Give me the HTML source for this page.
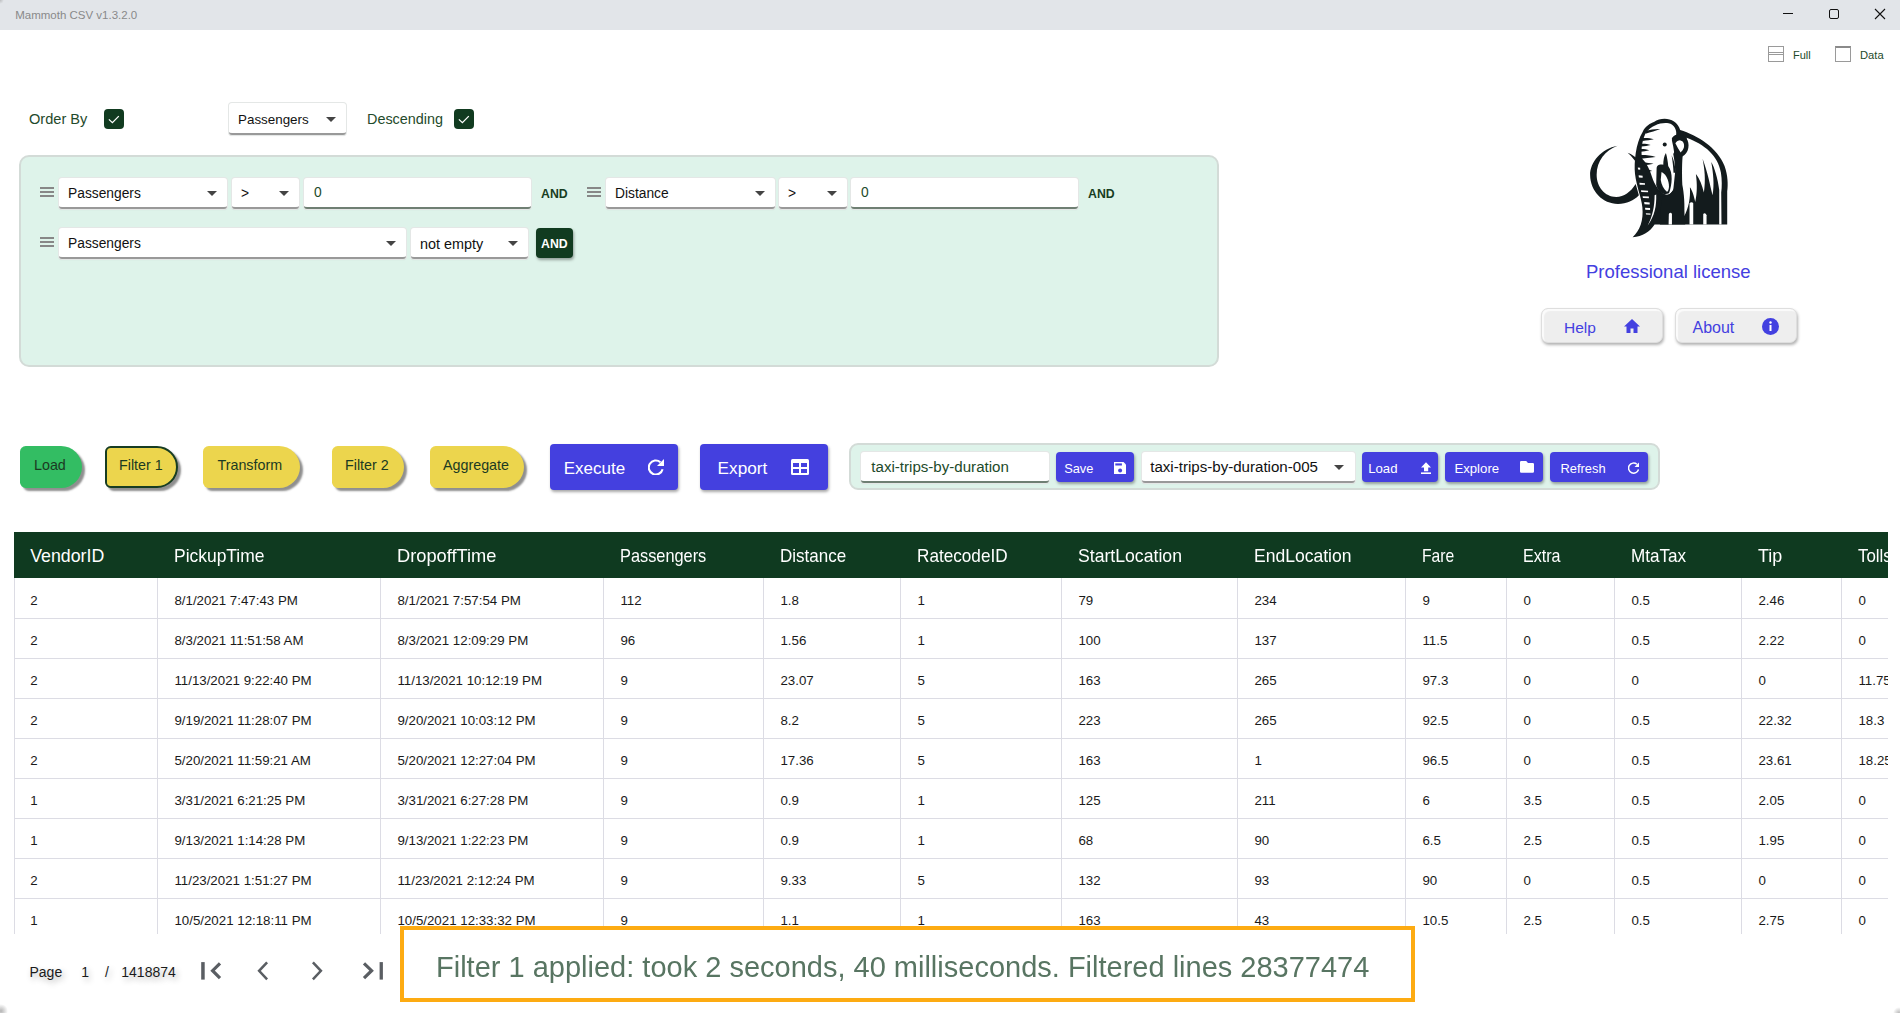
<!DOCTYPE html><html><head><meta charset="utf-8"><style>
*{box-sizing:border-box;margin:0;padding:0}
html,body{width:1900px;height:1013px;overflow:hidden;background:#fff;font-family:"Liberation Sans",sans-serif}
.a{position:absolute}
.t{position:absolute;white-space:nowrap;line-height:1}
.cb{position:absolute;width:20px;height:20px;background:#113b20;border-radius:4px}
.sel{position:absolute;background:#fff;border-radius:3px;box-shadow:0 0 0 1px #e4e7e6,0 1px 1px 0 rgba(0,0,0,.15);border-bottom:2px solid #999}
.arr{position:absolute;width:0;height:0;border-left:5px solid transparent;border-right:5px solid transparent;border-top:5px solid #444}
.ham{position:absolute;width:14px;height:10px;border-top:2px solid #878787;border-bottom:2px solid #878787}
.ham:after{content:"";position:absolute;left:0;top:2px;width:14px;height:2px;background:#878787}
.pipe{position:absolute;height:42px;border-radius:6px 22px 22px 6px;box-shadow:3px 3px 2px #8f8f8f}
.bbtn{position:absolute;background:#4440df;border-radius:4px;box-shadow:1px 2px 3px rgba(0,0,0,.35)}
.vl{position:absolute;width:1px;background:#dcdce4}
.hl{position:absolute;height:1px;background:#dcdce4}
</style></head><body>
<div class="a" style="left:0;top:0;width:1900px;height:30px;background:#e2e5e9"></div>
<div class="t" style="left:15.2px;top:10.47px;font-size:11.50px;color:#898989;">Mammoth CSV v1.3.2.0</div>
<div class="a" style="left:1783px;top:13px;width:10px;height:1px;background:#111"></div>
<div class="a" style="left:1829px;top:9px;width:10px;height:10px;border:1px solid #111;border-radius:2px"></div>
<svg class="a" style="left:1874px;top:8px" width="12" height="12" viewBox="0 0 12 12"><path d="M1 1L11 11M11 1L1 11" stroke="#111" stroke-width="1.1"/></svg>
<div class="a" style="left:1768px;top:46px;width:16px;height:16px;border:1px solid #9a9a9a"></div>
<div class="a" style="left:1768px;top:52px;width:16px;height:3px;border-top:1px solid #9a9a9a;border-bottom:1px solid #9a9a9a"></div>
<div class="t" style="left:1793.0px;top:49.69px;font-size:11.00px;color:#1d4a2a;">Full</div>
<div class="a" style="left:1835px;top:46px;width:16px;height:16px;border:1px solid #9a9a9a;border-top:2px solid #8a8a8a"></div>
<div class="t" style="left:1860.0px;top:49.52px;font-size:11.20px;color:#1d4a2a;">Data</div>
<div class="t" style="left:29.0px;top:112.14px;font-size:14.60px;color:#1f4a2b;">Order By</div>
<div class="cb" style="left:104px;top:109px"><svg width="20" height="20" viewBox="0 0 20 20" style="position:absolute;left:0;top:0"><path d="M4.9 10.4l3.5 3.3 6.4-6.6" fill="none" stroke="#fff" stroke-width="1.25"/></svg></div>
<div class="sel" style="left:229px;top:103px;width:117px;height:32px"></div>
<div class="t" style="left:238.0px;top:113.16px;font-size:13.40px;color:#111;">Passengers</div>
<div class="arr" style="left:326px;top:117px"></div>
<div class="t" style="left:367.0px;top:112.31px;font-size:14.40px;color:#1f4a2b;">Descending</div>
<div class="cb" style="left:454px;top:109px"><svg width="20" height="20" viewBox="0 0 20 20" style="position:absolute;left:0;top:0"><path d="M4.9 10.4l3.5 3.3 6.4-6.6" fill="none" stroke="#fff" stroke-width="1.25"/></svg></div>
<div class="a" style="left:19px;top:155px;width:1200px;height:212px;background:#def3ea;border:2px solid #d3dbd7;border-radius:10px"></div>
<div class="ham" style="left:40px;top:187px"></div>
<div class="sel" style="left:59px;top:178px;width:168px;height:31px"></div>
<div class="t" style="left:68.0px;top:187.42px;font-size:13.80px;color:#111;">Passengers</div>
<div class="arr" style="left:207px;top:191px"></div>
<div class="sel" style="left:232px;top:178px;width:67px;height:31px"></div>
<div class="t" style="left:241.0px;top:187.42px;font-size:13.80px;color:#111;">&gt;</div>
<div class="arr" style="left:279px;top:191px"></div>
<div class="sel" style="left:304px;top:178px;width:227px;height:31px;border-bottom-color:#6f7f73"></div>
<div class="t" style="left:314.0px;top:186.42px;font-size:13.80px;color:#1d4a2a;">0</div>
<div class="t" style="left:541.0px;top:187.59px;font-size:12.3px;font-weight:bold;color:#173d22">AND</div>
<div class="ham" style="left:587px;top:187px"></div>
<div class="sel" style="left:606px;top:178px;width:169px;height:31px"></div>
<div class="t" style="left:615.0px;top:187.42px;font-size:13.80px;color:#111;">Distance</div>
<div class="arr" style="left:755px;top:191px"></div>
<div class="sel" style="left:779px;top:178px;width:68px;height:31px"></div>
<div class="t" style="left:788.0px;top:187.42px;font-size:13.80px;color:#111;">&gt;</div>
<div class="arr" style="left:827px;top:191px"></div>
<div class="sel" style="left:851px;top:178px;width:227px;height:31px;border-bottom-color:#6f7f73"></div>
<div class="t" style="left:861.0px;top:186.42px;font-size:13.80px;color:#1d4a2a;">0</div>
<div class="t" style="left:1088.0px;top:187.59px;font-size:12.3px;font-weight:bold;color:#173d22">AND</div>
<div class="ham" style="left:40px;top:237px"></div>
<div class="sel" style="left:59px;top:228px;width:347px;height:31px"></div>
<div class="t" style="left:68.0px;top:237.42px;font-size:13.80px;color:#111;">Passengers</div>
<div class="arr" style="left:386px;top:241px"></div>
<div class="sel" style="left:411px;top:228px;width:117px;height:31px"></div>
<div class="t" style="left:420.0px;top:236.91px;font-size:14.40px;color:#111;">not empty</div>
<div class="arr" style="left:508px;top:241px"></div>
<div class="a" style="left:536px;top:228px;width:37px;height:30px;background:#113b20;border-radius:4px;box-shadow:1px 2px 3px rgba(0,0,0,.35)"></div>
<div class="t" style="left:541.0px;top:238.19px;font-size:12.3px;font-weight:bold;color:#fff">AND</div>
<svg class="a" style="left:1580px;top:110px" width="160" height="135" viewBox="0 0 1201 1013">
<g fill="#131b1d">
<path d="M282 268 C160 290 75 390 76 490 C78 610 170 705 285 705 C350 705 405 680 442 640 L418 555 C380 615 330 652 272 652 C185 650 125 575 125 485 C125 385 190 300 282 268 Z"/>
<path d="M395 955 C450 905 478 830 468 730 C460 650 425 580 413 480 C405 390 418 250 470 165 C490 118 530 100 555 90 C620 45 725 60 752 150 C880 190 1030 280 1085 420 C1110 490 1112 560 1105 610 L1105 860 L560 860 C525 915 470 950 395 955 Z"/>
</g>
<g fill="#fff">
<path d="M492 175 C540 112 610 92 665 100 C705 108 728 150 722 185 C700 195 688 210 690 228 C705 285 712 350 718 430 L700 600 C680 630 660 640 640 635 C590 610 560 560 540 500 C520 440 500 400 470 370 C455 330 460 240 492 175 Z"/>
<path d="M800 208 C935 258 1035 340 1058 470 C1066 520 1066 580 1060 620 L1062 860 L1045 860 L1045 600 C1035 520 1010 430 985 390 C1000 470 1010 560 995 640 C975 560 960 470 920 365 C935 440 945 520 930 620 C915 560 900 520 870 480 C880 560 880 620 865 690 C855 640 840 600 825 580 C830 660 815 740 780 800 C790 720 780 620 768 560 C765 480 765 380 772 335 C800 310 815 260 800 208 Z"/>
</g>
<g fill="#131b1d">
<path fill="#fff" d="M716 250 C730 222 768 220 782 245 C795 272 785 305 758 322 C742 300 728 275 716 250 Z"/>
<!-- ear C -->
<path d="M688 218 C700 180 760 172 795 208 C830 250 818 325 768 348 L752 318 C782 300 790 262 772 238 C752 218 725 222 712 242 Z"/>
<circle cx="636" cy="258" r="15"/>
<!-- forehead hair streaks (taper right) -->
<path d="M488 158 C530 148 570 140 602 143 C570 156 530 166 492 178Z"/>
<path d="M468 210 C500 208 530 211 554 219 C530 224 500 228 470 232Z"/>
<path d="M460 253 C488 252 510 255 530 262 C508 267 485 271 462 273Z"/>
<path d="M452 293 C478 292 500 296 520 302 C498 307 475 311 455 313Z"/>
<path d="M438 338 C490 336 532 341 568 352 C530 359 480 363 440 364Z"/>
<path d="M468 393 C500 393 526 397 552 404 C526 411 500 413 472 414Z"/>
<path d="M498 446 C515 446 530 451 542 458 C526 461 512 463 500 463Z"/>
<!-- neck dark band -->
<path d="M715 300 C730 360 740 430 745 520 L770 600 L790 860 L600 860 C600 760 610 700 620 650 C660 650 700 620 715 560 C720 500 715 400 700 330 Z"/>
<!-- face hair streaks near trunk -->
<path d="M688 340 C705 380 718 420 715 470 L702 470 C700 425 695 385 688 340 Z"/>
<!-- trunk curl -->
<path d="M575 440 C575 410 600 405 625 410 C625 380 630 345 645 322 C655 360 660 390 662 420 C700 470 692 560 668 625 C620 645 580 605 572 560 Z"/>
<!-- second tusk -->
<path d="M358 320 C420 345 460 390 490 450 C520 520 560 590 600 620 C630 640 660 640 672 635 C620 662 560 640 530 592 C500 540 470 470 440 420 C420 385 390 350 358 320 Z"/>
</g>
<g fill="#fff">
<path d="M612 466 C645 480 668 530 668 575 C665 600 660 612 652 614 C628 595 612 560 606 525 Z"/>
<path d="M572 635 C575 720 560 800 508 866 C545 800 560 720 560 640 Z"/>
<path d="M665 860 L667 780 C672 768 686 768 690 780 L690 860 Z"/>
<path d="M822 860 L822 700 C830 690 845 690 850 700 L850 860 Z"/>
<path d="M925 860 L925 780 C932 770 945 772 950 790 L950 860 Z"/>
<path d="M434 432 L452 434 L452 448 L436 447Z"/>
<path d="M440 490 L470 493 L470 508 L442 506Z"/>
<path d="M446 546 L488 549 L488 561 L448 560Z"/>
<path d="M458 603 L511 606 L511 617 L460 616Z"/>
<path d="M470 647 L517 650 L517 662 L472 661Z"/>
<path d="M482 691 L523 694 L523 709 L484 707Z"/>
<path d="M488 733 L526 736 L526 751 L490 749Z"/>
<path d="M494 774 L529 776 L529 786 L496 785Z"/>
</g>
</svg>

<div class="t" style="left:1586.0px;top:262.84px;font-size:18.50px;color:#4340e0;">Professional license</div>
<div class="a" style="left:1541px;top:308px;width:122px;height:35px;background:#eeeeee;border:1px solid #dedede;border-radius:7px;box-shadow:inset 2px 2px 1px #fbfbfb,1px 2px 3px rgba(0,0,0,.3)"></div>
<div class="t" style="left:1564.0px;top:320.18px;font-size:15.50px;color:#4340e0;">Help</div>
<svg class="a" style="left:1623px;top:318px" width="18" height="16" viewBox="0 0 18 16"><path d="M9 1L1 8.5h2.5V15h4v-4.5h3V15h4V8.5H17z" fill="#4340e0"/></svg>
<div class="a" style="left:1675px;top:308px;width:122px;height:35px;background:#eeeeee;border:1px solid #dedede;border-radius:7px;box-shadow:inset 2px 2px 1px #fbfbfb,1px 2px 3px rgba(0,0,0,.3)"></div>
<div class="t" style="left:1692.5px;top:319.76px;font-size:16.00px;color:#4340e0;">About</div>
<svg class="a" style="left:1761px;top:317px" width="19" height="19" viewBox="0 0 19 19"><circle cx="9.5" cy="9.5" r="8.5" fill="#4340e0"/><rect x="8.5" y="8" width="2" height="6" fill="#fff"/><circle cx="9.5" cy="5.5" r="1.2" fill="#fff"/></svg>
<div class="pipe" style="left:20px;top:446px;width:62px;background:#33bd63"></div>
<div class="t" style="left:34.0px;top:457.70px;font-size:14.30px;color:#1b3a22;">Load</div>
<div class="pipe" style="left:105px;top:446px;width:73px;background:#ecd54d;border:2px solid #173d22"></div>
<div class="t" style="left:119.0px;top:457.70px;font-size:14.30px;color:#1b3a22;">Filter 1</div>
<div class="pipe" style="left:203px;top:446px;width:97px;background:#ecd54d"></div>
<div class="t" style="left:217.5px;top:457.70px;font-size:14.30px;color:#1b3a22;">Transform</div>
<div class="pipe" style="left:332px;top:446px;width:72px;background:#ecd54d"></div>
<div class="t" style="left:345.0px;top:457.70px;font-size:14.30px;color:#1b3a22;">Filter 2</div>
<div class="pipe" style="left:430px;top:446px;width:94px;background:#ecd54d"></div>
<div class="t" style="left:443.0px;top:457.70px;font-size:14.30px;color:#1b3a22;">Aggregate</div>
<div class="bbtn" style="left:550px;top:444px;width:128px;height:46px"></div>
<div class="t" style="left:563.7px;top:460.11px;font-size:17.00px;color:#fff;">Execute</div>
<svg class="a" style="left:648px;top:459px" width="16" height="16" viewBox="0 0 16 16"><path d="M14.6 10.2A7 7 0 1 1 12.4 3.2" fill="none" stroke="#fff" stroke-width="2.1"/><path d="M16 0V7H9z" fill="#fff"/></svg>
<div class="bbtn" style="left:700px;top:444px;width:128px;height:46px"></div>
<div class="t" style="left:717.6px;top:459.94px;font-size:17.20px;color:#fff;">Export</div>
<svg class="a" style="left:791px;top:459px" width="18" height="16" viewBox="0 0 18 16"><rect x="0" y="0" width="18" height="16" rx="1.5" fill="#fff"/><rect x="2" y="4" width="6" height="4" fill="#4440df"/><rect x="10" y="4" width="6" height="4" fill="#4440df"/><rect x="2" y="10" width="6" height="4" fill="#4440df"/><rect x="10" y="10" width="6" height="4" fill="#4440df"/></svg>
<div class="a" style="left:849px;top:443px;width:811px;height:47px;background:#def3ea;border:2px solid #d3dbd7;border-radius:9px"></div>
<div class="sel" style="left:861px;top:452px;width:188px;height:31px;border-bottom-color:#6f7f73"></div>
<div class="t" style="left:871.3px;top:458.52px;font-size:15.10px;color:#1d4a2a;">taxi-trips-by-duration</div>
<div class="bbtn" style="left:1056px;top:452px;width:78px;height:30px"></div>
<div class="t" style="left:1064.2px;top:463.16px;font-size:12.80px;color:#fff;">Save</div>
<svg class="a" style="left:1114px;top:462px" width="12" height="12" viewBox="0 0 12 12"><path d="M0 0H9.5L12 2.5V12H0z" fill="#fff"/><rect x="1.3" y="1.4" width="6.6" height="2.1" fill="#4440df"/><circle cx="6.1" cy="8.5" r="2" fill="#4440df"/></svg>
<div class="sel" style="left:1142px;top:452px;width:213px;height:31px"></div>
<div class="t" style="left:1150.2px;top:459.22px;font-size:15.10px;color:#111;">taxi-trips-by-duration-005</div>
<div class="arr" style="left:1334px;top:465px"></div>
<div class="bbtn" style="left:1362px;top:452px;width:76px;height:30px"></div>
<div class="t" style="left:1368.2px;top:462.03px;font-size:13.20px;color:#fff;">Load</div>
<svg class="a" style="left:1421px;top:461.5px" width="10" height="12" viewBox="0 0 10 12"><path d="M5 0.2L0 5.4h3v3.9h4.2V5.4H10z" fill="#fff"/><rect x="0" y="10.4" width="10" height="1.6" fill="#fff"/></svg>
<div class="bbtn" style="left:1445px;top:452px;width:98px;height:30px"></div>
<div class="t" style="left:1454.4px;top:462.03px;font-size:13.20px;color:#fff;">Explore</div>
<svg class="a" style="left:1520px;top:461px" width="14" height="11.7" viewBox="0 0 14 11.7"><path d="M0 1.2Q0 0 1.2 0H6.2L8 1.9H12.8Q14 1.9 14 3.1V10.5Q14 11.7 12.8 11.7H1.2Q0 11.7 0 10.5z" fill="#fff"/></svg>
<div class="bbtn" style="left:1550px;top:452px;width:98px;height:30px"></div>
<div class="t" style="left:1560.5px;top:463.08px;font-size:12.90px;color:#fff;">Refresh</div>
<svg class="a" style="left:1627.5px;top:462px" width="11.5" height="11.5" viewBox="0 0 16 16"><path d="M14.6 10.2A7 7 0 1 1 12.4 3.2" fill="none" stroke="#fff" stroke-width="2.1"/><path d="M16 0V7H9z" fill="#fff"/></svg>
<div class="a" style="left:0;top:532px;width:1888px;height:402px;overflow:hidden">
<div class="a" style="left:14px;top:0;width:1874px;height:46px;background:#0f3a20"></div>
<div class="t" style="left:30.2px;top:16.13px;font-size:17.80px;color:#fff;transform:scaleX(1.000);transform-origin:0 0">VendorID</div>
<div class="t" style="left:174.4px;top:16.13px;font-size:17.80px;color:#fff;transform:scaleX(0.981);transform-origin:0 0">PickupTime</div>
<div class="t" style="left:397.4px;top:16.13px;font-size:17.80px;color:#fff;transform:scaleX(1.027);transform-origin:0 0">DropoffTime</div>
<div class="t" style="left:620.4px;top:16.13px;font-size:17.80px;color:#fff;transform:scaleX(0.919);transform-origin:0 0">Passengers</div>
<div class="t" style="left:780.4px;top:16.13px;font-size:17.80px;color:#fff;transform:scaleX(0.957);transform-origin:0 0">Distance</div>
<div class="t" style="left:917.4px;top:16.13px;font-size:17.80px;color:#fff;transform:scaleX(0.965);transform-origin:0 0">RatecodeID</div>
<div class="t" style="left:1078.4px;top:16.13px;font-size:17.80px;color:#fff;transform:scaleX(0.992);transform-origin:0 0">StartLocation</div>
<div class="t" style="left:1254.4px;top:16.13px;font-size:17.80px;color:#fff;transform:scaleX(0.986);transform-origin:0 0">EndLocation</div>
<div class="t" style="left:1422.4px;top:16.13px;font-size:17.80px;color:#fff;transform:scaleX(0.882);transform-origin:0 0">Fare</div>
<div class="t" style="left:1523.4px;top:16.13px;font-size:17.80px;color:#fff;transform:scaleX(0.905);transform-origin:0 0">Extra</div>
<div class="t" style="left:1631.4px;top:16.13px;font-size:17.80px;color:#fff;transform:scaleX(0.962);transform-origin:0 0">MtaTax</div>
<div class="t" style="left:1758.4px;top:16.13px;font-size:17.80px;color:#fff;transform:scaleX(1.006);transform-origin:0 0">Tip</div>
<div class="t" style="left:1858.4px;top:16.13px;font-size:17.80px;color:#fff;transform:scaleX(0.950);transform-origin:0 0">Tolls</div>
<div class="vl" style="left:14px;top:46px;height:360px"></div>
<div class="vl" style="left:157px;top:46px;height:360px"></div>
<div class="vl" style="left:380px;top:46px;height:360px"></div>
<div class="vl" style="left:603px;top:46px;height:360px"></div>
<div class="vl" style="left:763px;top:46px;height:360px"></div>
<div class="vl" style="left:900px;top:46px;height:360px"></div>
<div class="vl" style="left:1061px;top:46px;height:360px"></div>
<div class="vl" style="left:1237px;top:46px;height:360px"></div>
<div class="vl" style="left:1405px;top:46px;height:360px"></div>
<div class="vl" style="left:1506px;top:46px;height:360px"></div>
<div class="vl" style="left:1614px;top:46px;height:360px"></div>
<div class="vl" style="left:1741px;top:46px;height:360px"></div>
<div class="vl" style="left:1841px;top:46px;height:360px"></div>
<div class="t" style="left:30.2px;top:61.94px;font-size:13.30px;color:#1a1a1a;">2</div>
<div class="t" style="left:174.4px;top:61.94px;font-size:13.30px;color:#1a1a1a;">8/1/2021 7:47:43 PM</div>
<div class="t" style="left:397.4px;top:61.94px;font-size:13.30px;color:#1a1a1a;">8/1/2021 7:57:54 PM</div>
<div class="t" style="left:620.4px;top:61.94px;font-size:13.30px;color:#1a1a1a;">112</div>
<div class="t" style="left:780.4px;top:61.94px;font-size:13.30px;color:#1a1a1a;">1.8</div>
<div class="t" style="left:917.4px;top:61.94px;font-size:13.30px;color:#1a1a1a;">1</div>
<div class="t" style="left:1078.4px;top:61.94px;font-size:13.30px;color:#1a1a1a;">79</div>
<div class="t" style="left:1254.4px;top:61.94px;font-size:13.30px;color:#1a1a1a;">234</div>
<div class="t" style="left:1422.4px;top:61.94px;font-size:13.30px;color:#1a1a1a;">9</div>
<div class="t" style="left:1523.4px;top:61.94px;font-size:13.30px;color:#1a1a1a;">0</div>
<div class="t" style="left:1631.4px;top:61.94px;font-size:13.30px;color:#1a1a1a;">0.5</div>
<div class="t" style="left:1758.4px;top:61.94px;font-size:13.30px;color:#1a1a1a;">2.46</div>
<div class="t" style="left:1858.4px;top:61.94px;font-size:13.30px;color:#1a1a1a;">0</div>
<div class="hl" style="left:14px;top:86px;width:1874px"></div>
<div class="t" style="left:30.2px;top:101.94px;font-size:13.30px;color:#1a1a1a;">2</div>
<div class="t" style="left:174.4px;top:101.94px;font-size:13.30px;color:#1a1a1a;">8/3/2021 11:51:58 AM</div>
<div class="t" style="left:397.4px;top:101.94px;font-size:13.30px;color:#1a1a1a;">8/3/2021 12:09:29 PM</div>
<div class="t" style="left:620.4px;top:101.94px;font-size:13.30px;color:#1a1a1a;">96</div>
<div class="t" style="left:780.4px;top:101.94px;font-size:13.30px;color:#1a1a1a;">1.56</div>
<div class="t" style="left:917.4px;top:101.94px;font-size:13.30px;color:#1a1a1a;">1</div>
<div class="t" style="left:1078.4px;top:101.94px;font-size:13.30px;color:#1a1a1a;">100</div>
<div class="t" style="left:1254.4px;top:101.94px;font-size:13.30px;color:#1a1a1a;">137</div>
<div class="t" style="left:1422.4px;top:101.94px;font-size:13.30px;color:#1a1a1a;">11.5</div>
<div class="t" style="left:1523.4px;top:101.94px;font-size:13.30px;color:#1a1a1a;">0</div>
<div class="t" style="left:1631.4px;top:101.94px;font-size:13.30px;color:#1a1a1a;">0.5</div>
<div class="t" style="left:1758.4px;top:101.94px;font-size:13.30px;color:#1a1a1a;">2.22</div>
<div class="t" style="left:1858.4px;top:101.94px;font-size:13.30px;color:#1a1a1a;">0</div>
<div class="hl" style="left:14px;top:126px;width:1874px"></div>
<div class="t" style="left:30.2px;top:141.94px;font-size:13.30px;color:#1a1a1a;">2</div>
<div class="t" style="left:174.4px;top:141.94px;font-size:13.30px;color:#1a1a1a;">11/13/2021 9:22:40 PM</div>
<div class="t" style="left:397.4px;top:141.94px;font-size:13.30px;color:#1a1a1a;">11/13/2021 10:12:19 PM</div>
<div class="t" style="left:620.4px;top:141.94px;font-size:13.30px;color:#1a1a1a;">9</div>
<div class="t" style="left:780.4px;top:141.94px;font-size:13.30px;color:#1a1a1a;">23.07</div>
<div class="t" style="left:917.4px;top:141.94px;font-size:13.30px;color:#1a1a1a;">5</div>
<div class="t" style="left:1078.4px;top:141.94px;font-size:13.30px;color:#1a1a1a;">163</div>
<div class="t" style="left:1254.4px;top:141.94px;font-size:13.30px;color:#1a1a1a;">265</div>
<div class="t" style="left:1422.4px;top:141.94px;font-size:13.30px;color:#1a1a1a;">97.3</div>
<div class="t" style="left:1523.4px;top:141.94px;font-size:13.30px;color:#1a1a1a;">0</div>
<div class="t" style="left:1631.4px;top:141.94px;font-size:13.30px;color:#1a1a1a;">0</div>
<div class="t" style="left:1758.4px;top:141.94px;font-size:13.30px;color:#1a1a1a;">0</div>
<div class="t" style="left:1858.4px;top:141.94px;font-size:13.30px;color:#1a1a1a;">11.75</div>
<div class="hl" style="left:14px;top:166px;width:1874px"></div>
<div class="t" style="left:30.2px;top:181.94px;font-size:13.30px;color:#1a1a1a;">2</div>
<div class="t" style="left:174.4px;top:181.94px;font-size:13.30px;color:#1a1a1a;">9/19/2021 11:28:07 PM</div>
<div class="t" style="left:397.4px;top:181.94px;font-size:13.30px;color:#1a1a1a;">9/20/2021 10:03:12 PM</div>
<div class="t" style="left:620.4px;top:181.94px;font-size:13.30px;color:#1a1a1a;">9</div>
<div class="t" style="left:780.4px;top:181.94px;font-size:13.30px;color:#1a1a1a;">8.2</div>
<div class="t" style="left:917.4px;top:181.94px;font-size:13.30px;color:#1a1a1a;">5</div>
<div class="t" style="left:1078.4px;top:181.94px;font-size:13.30px;color:#1a1a1a;">223</div>
<div class="t" style="left:1254.4px;top:181.94px;font-size:13.30px;color:#1a1a1a;">265</div>
<div class="t" style="left:1422.4px;top:181.94px;font-size:13.30px;color:#1a1a1a;">92.5</div>
<div class="t" style="left:1523.4px;top:181.94px;font-size:13.30px;color:#1a1a1a;">0</div>
<div class="t" style="left:1631.4px;top:181.94px;font-size:13.30px;color:#1a1a1a;">0.5</div>
<div class="t" style="left:1758.4px;top:181.94px;font-size:13.30px;color:#1a1a1a;">22.32</div>
<div class="t" style="left:1858.4px;top:181.94px;font-size:13.30px;color:#1a1a1a;">18.3</div>
<div class="hl" style="left:14px;top:206px;width:1874px"></div>
<div class="t" style="left:30.2px;top:221.94px;font-size:13.30px;color:#1a1a1a;">2</div>
<div class="t" style="left:174.4px;top:221.94px;font-size:13.30px;color:#1a1a1a;">5/20/2021 11:59:21 AM</div>
<div class="t" style="left:397.4px;top:221.94px;font-size:13.30px;color:#1a1a1a;">5/20/2021 12:27:04 PM</div>
<div class="t" style="left:620.4px;top:221.94px;font-size:13.30px;color:#1a1a1a;">9</div>
<div class="t" style="left:780.4px;top:221.94px;font-size:13.30px;color:#1a1a1a;">17.36</div>
<div class="t" style="left:917.4px;top:221.94px;font-size:13.30px;color:#1a1a1a;">5</div>
<div class="t" style="left:1078.4px;top:221.94px;font-size:13.30px;color:#1a1a1a;">163</div>
<div class="t" style="left:1254.4px;top:221.94px;font-size:13.30px;color:#1a1a1a;">1</div>
<div class="t" style="left:1422.4px;top:221.94px;font-size:13.30px;color:#1a1a1a;">96.5</div>
<div class="t" style="left:1523.4px;top:221.94px;font-size:13.30px;color:#1a1a1a;">0</div>
<div class="t" style="left:1631.4px;top:221.94px;font-size:13.30px;color:#1a1a1a;">0.5</div>
<div class="t" style="left:1758.4px;top:221.94px;font-size:13.30px;color:#1a1a1a;">23.61</div>
<div class="t" style="left:1858.4px;top:221.94px;font-size:13.30px;color:#1a1a1a;">18.25</div>
<div class="hl" style="left:14px;top:246px;width:1874px"></div>
<div class="t" style="left:30.2px;top:261.94px;font-size:13.30px;color:#1a1a1a;">1</div>
<div class="t" style="left:174.4px;top:261.94px;font-size:13.30px;color:#1a1a1a;">3/31/2021 6:21:25 PM</div>
<div class="t" style="left:397.4px;top:261.94px;font-size:13.30px;color:#1a1a1a;">3/31/2021 6:27:28 PM</div>
<div class="t" style="left:620.4px;top:261.94px;font-size:13.30px;color:#1a1a1a;">9</div>
<div class="t" style="left:780.4px;top:261.94px;font-size:13.30px;color:#1a1a1a;">0.9</div>
<div class="t" style="left:917.4px;top:261.94px;font-size:13.30px;color:#1a1a1a;">1</div>
<div class="t" style="left:1078.4px;top:261.94px;font-size:13.30px;color:#1a1a1a;">125</div>
<div class="t" style="left:1254.4px;top:261.94px;font-size:13.30px;color:#1a1a1a;">211</div>
<div class="t" style="left:1422.4px;top:261.94px;font-size:13.30px;color:#1a1a1a;">6</div>
<div class="t" style="left:1523.4px;top:261.94px;font-size:13.30px;color:#1a1a1a;">3.5</div>
<div class="t" style="left:1631.4px;top:261.94px;font-size:13.30px;color:#1a1a1a;">0.5</div>
<div class="t" style="left:1758.4px;top:261.94px;font-size:13.30px;color:#1a1a1a;">2.05</div>
<div class="t" style="left:1858.4px;top:261.94px;font-size:13.30px;color:#1a1a1a;">0</div>
<div class="hl" style="left:14px;top:286px;width:1874px"></div>
<div class="t" style="left:30.2px;top:301.94px;font-size:13.30px;color:#1a1a1a;">1</div>
<div class="t" style="left:174.4px;top:301.94px;font-size:13.30px;color:#1a1a1a;">9/13/2021 1:14:28 PM</div>
<div class="t" style="left:397.4px;top:301.94px;font-size:13.30px;color:#1a1a1a;">9/13/2021 1:22:23 PM</div>
<div class="t" style="left:620.4px;top:301.94px;font-size:13.30px;color:#1a1a1a;">9</div>
<div class="t" style="left:780.4px;top:301.94px;font-size:13.30px;color:#1a1a1a;">0.9</div>
<div class="t" style="left:917.4px;top:301.94px;font-size:13.30px;color:#1a1a1a;">1</div>
<div class="t" style="left:1078.4px;top:301.94px;font-size:13.30px;color:#1a1a1a;">68</div>
<div class="t" style="left:1254.4px;top:301.94px;font-size:13.30px;color:#1a1a1a;">90</div>
<div class="t" style="left:1422.4px;top:301.94px;font-size:13.30px;color:#1a1a1a;">6.5</div>
<div class="t" style="left:1523.4px;top:301.94px;font-size:13.30px;color:#1a1a1a;">2.5</div>
<div class="t" style="left:1631.4px;top:301.94px;font-size:13.30px;color:#1a1a1a;">0.5</div>
<div class="t" style="left:1758.4px;top:301.94px;font-size:13.30px;color:#1a1a1a;">1.95</div>
<div class="t" style="left:1858.4px;top:301.94px;font-size:13.30px;color:#1a1a1a;">0</div>
<div class="hl" style="left:14px;top:326px;width:1874px"></div>
<div class="t" style="left:30.2px;top:341.94px;font-size:13.30px;color:#1a1a1a;">2</div>
<div class="t" style="left:174.4px;top:341.94px;font-size:13.30px;color:#1a1a1a;">11/23/2021 1:51:27 PM</div>
<div class="t" style="left:397.4px;top:341.94px;font-size:13.30px;color:#1a1a1a;">11/23/2021 2:12:24 PM</div>
<div class="t" style="left:620.4px;top:341.94px;font-size:13.30px;color:#1a1a1a;">9</div>
<div class="t" style="left:780.4px;top:341.94px;font-size:13.30px;color:#1a1a1a;">9.33</div>
<div class="t" style="left:917.4px;top:341.94px;font-size:13.30px;color:#1a1a1a;">5</div>
<div class="t" style="left:1078.4px;top:341.94px;font-size:13.30px;color:#1a1a1a;">132</div>
<div class="t" style="left:1254.4px;top:341.94px;font-size:13.30px;color:#1a1a1a;">93</div>
<div class="t" style="left:1422.4px;top:341.94px;font-size:13.30px;color:#1a1a1a;">90</div>
<div class="t" style="left:1523.4px;top:341.94px;font-size:13.30px;color:#1a1a1a;">0</div>
<div class="t" style="left:1631.4px;top:341.94px;font-size:13.30px;color:#1a1a1a;">0.5</div>
<div class="t" style="left:1758.4px;top:341.94px;font-size:13.30px;color:#1a1a1a;">0</div>
<div class="t" style="left:1858.4px;top:341.94px;font-size:13.30px;color:#1a1a1a;">0</div>
<div class="hl" style="left:14px;top:366px;width:1874px"></div>
<div class="t" style="left:30.2px;top:381.94px;font-size:13.30px;color:#1a1a1a;">1</div>
<div class="t" style="left:174.4px;top:381.94px;font-size:13.30px;color:#1a1a1a;">10/5/2021 12:18:11 PM</div>
<div class="t" style="left:397.4px;top:381.94px;font-size:13.30px;color:#1a1a1a;">10/5/2021 12:33:32 PM</div>
<div class="t" style="left:620.4px;top:381.94px;font-size:13.30px;color:#1a1a1a;">9</div>
<div class="t" style="left:780.4px;top:381.94px;font-size:13.30px;color:#1a1a1a;">1.1</div>
<div class="t" style="left:917.4px;top:381.94px;font-size:13.30px;color:#1a1a1a;">1</div>
<div class="t" style="left:1078.4px;top:381.94px;font-size:13.30px;color:#1a1a1a;">163</div>
<div class="t" style="left:1254.4px;top:381.94px;font-size:13.30px;color:#1a1a1a;">43</div>
<div class="t" style="left:1422.4px;top:381.94px;font-size:13.30px;color:#1a1a1a;">10.5</div>
<div class="t" style="left:1523.4px;top:381.94px;font-size:13.30px;color:#1a1a1a;">2.5</div>
<div class="t" style="left:1631.4px;top:381.94px;font-size:13.30px;color:#1a1a1a;">0.5</div>
<div class="t" style="left:1758.4px;top:381.94px;font-size:13.30px;color:#1a1a1a;">2.75</div>
<div class="t" style="left:1858.4px;top:381.94px;font-size:13.30px;color:#1a1a1a;">0</div>
</div>
<div class="t" style="left:29.5px;top:964.95px;font-size:14.00px;color:#1a1a1a;text-shadow:2px 3px 6px rgba(0,0,0,.32)">Page</div>
<div class="t" style="left:81.3px;top:964.95px;font-size:14.00px;color:#1a1a1a;text-shadow:2px 3px 6px rgba(0,0,0,.32)">1</div>
<div class="t" style="left:105.0px;top:964.95px;font-size:14.00px;color:#1a1a1a;text-shadow:2px 3px 6px rgba(0,0,0,.32)">/</div>
<div class="t" style="left:121.3px;top:964.95px;font-size:14.00px;color:#1a1a1a;text-shadow:2px 3px 6px rgba(0,0,0,.32)">1418874</div>
<svg class="a" style="left:195px;top:955px" width="195" height="30" viewBox="195 955 195 30"><g fill="none" stroke="#5a5e63"><path d="M220 963.3L212.6 970.7L220 978.1" stroke-width="3.2"/><path d="M267.1 962.3L259.1 970.85L267.1 979.4" stroke-width="2.5"/><path d="M312.9 962.3L320.9 970.85L312.9 979.4" stroke-width="2.5"/><path d="M364 963.3L371.6 970.7L364 978.1" stroke-width="3.2"/></g><rect x="201.2" y="962.1" width="3.5" height="17.5" fill="#5a5e63"/><rect x="379.6" y="962.1" width="3.3" height="17.5" fill="#5a5e63"/></svg>
<div class="a" style="left:400px;top:926px;width:1015px;height:76px;border:4px solid #fdab12;background:#fff"></div>
<div class="t" style="left:436.0px;top:953.25px;font-size:29.00px;color:#587562;filter:blur(0.45px)">Filter 1 applied: took 2 seconds, 40 milliseconds. Filtered lines 28377474</div>
<div class="a" style="left:-6px;top:1004px;width:14px;height:14px;border-radius:50%;background:radial-gradient(circle,rgba(120,120,120,.55),rgba(120,120,120,0) 70%)"></div>
<div class="a" style="left:1893px;top:1007px;width:12px;height:12px;border-radius:50%;background:radial-gradient(circle,rgba(120,120,120,.5),rgba(120,120,120,0) 70%)"></div>
<div class="a" style="left:-4px;top:-4px;width:8px;height:8px;border-radius:50%;background:radial-gradient(circle,rgba(150,150,150,.5),rgba(150,150,150,0) 70%)"></div>
</body></html>
